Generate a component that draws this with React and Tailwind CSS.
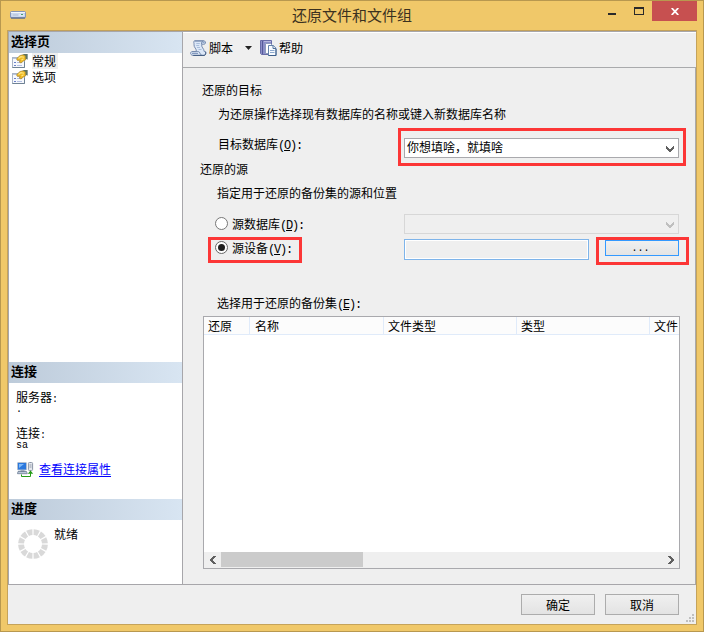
import React from "react";

function Key({ k }) {
  return (
    <span className="font-['Liberation_Mono',monospace] text-[12px] leading-none tracking-[-1.2px]">
      (<span className="underline underline-offset-1">{k}</span>):
    </span>
  );
}

function Chevron({ color = "#606060", className = "" }) {
  return (
    <svg width="8" height="6" viewBox="0 0 8 6" className={className} shapeRendering="crispEdges">
      <path d="M0 0h1v1h1v1h1v1h2v-1h1v-1h1v-1h1v3h-1v1h-1v1h-1v1h-2v-1h-1v-1h-1v-1h-1z" fill={color} />
    </svg>
  );
}

function DriveIcon() {
  return (
    <svg width="16" height="8" viewBox="0 0 16 8">
      <rect x="0.5" y="0.5" width="15" height="6.5" rx="1" fill="#b9c9e4" stroke="#8595b8" />
      <path d="M1 1.5h14" stroke="#f3f7fc" />
      <path d="M1.5 2.5h13v3h-13z" fill="#dce6f4" />
      <path d="M2.5 4h6" stroke="#a3b3d2" />
      <rect x="11" y="3" width="2" height="1" fill="#4d9c70" />
      <path d="M1 7h14" stroke="#49597c" />
    </svg>
  );
}

function PageIcon() {
  return (
    <svg width="17" height="15" viewBox="0 0 17 15" className="shrink-0">
      <rect x="0.5" y="3.5" width="12" height="10" fill="#f6f8fc" stroke="#aab5c6" />
      <path d="M1 4.5h11" stroke="#b8c5dc" />
      <path d="M.5 13.5h12v-6" stroke="#6f8294" fill="none" />
      <path d="M2 8.5h2M2 11.5h2" stroke="#6a80c8" />
      <path d="M5 8.5h5M5 11.5h5" stroke="#b4bfe2" />
      <path d="M4.5 4.8L8 1.5 11 .8l3 .7v4L11.5 7 9 9 7.3 8.2l.8-2-2.6.3z" fill="#efb921" stroke="#94762f" strokeWidth=".6" />
      <path d="M6.5 4.5L9 2.6l3 .7M9.5 6l2-1.2" stroke="#ffe782" fill="none" strokeWidth="1.1" />
      <path d="M10.5 0H16v5.5l-2.5-.8V2z" fill="#63745c" />
      <path d="M15.5 0v5" stroke="#8fa0a0" />
    </svg>
  );
}

function ScriptIcon() {
  return (
    <svg width="17" height="17" viewBox="0 0 17 17">
      <path d="M4.5.8h9.2c2.3 0 2.3 3.4.4 3.4h-2.3c-1 3 2.5 4.5 2.4 7.3h1.3c.8 0 .9 3.9-1.6 3.9H3.2c-3.2 0-3.4-3.8-.9-3.8h4C7 9 3.5 7.2 4 4.5 4.3 3 3 2 4.5.8z" fill="#dce7f7" stroke="#7489ad" />
      <path d="M4.5 1h9c-1.7.4-2 1.5-2 3.2M2 11.7h6.7c1.2 0 1.1 3 3 3.5" fill="none" stroke="#7489ad" />
      <path d="M3.2 15.4H14c1.3 0 1.8-1.6 1.5-3.2" fill="none" stroke="#3f597f" />
      <path d="M6.3 3.5h3.5M6.2 5.5h3M7 7.5h3M8.5 9.5h3" stroke="#a9bedb" />
      <path d="M2 13.5h6" stroke="#8499be" />
      <path d="M12.5 2.5h2" stroke="#8ba4c9" />
    </svg>
  );
}

function HelpIcon() {
  return (
    <svg width="17" height="17" viewBox="0 0 17 17">
      <path d="M.5.5h11v14H1.5l-1-1z" fill="#8c8fc8" stroke="#696ca8" />
      <path d="M2.5 1v13" stroke="#555a99" />
      <path d="M4 1.5h7" stroke="#b5b8df" />
      <path d="M5.5 3.5h5l2 2v8h-7z" fill="#fff" stroke="#8c9bbd" />
      <path d="M8.5 5.5h4.8L16 8.2v7.3H8.5z" fill="#f8fbff" stroke="#6583aa" />
      <path d="M13 5.5v3h3" fill="none" stroke="#52719a" />
      <path d="M10 10.5h4.5M10 12.5h4.5" stroke="#8ca9ce" />
      <path d="M8.5 15.5H16V9" fill="none" stroke="#3d5f8b" />
    </svg>
  );
}

function ConnectionIcon() {
  return (
    <svg width="17" height="16" viewBox="0 0 17 16">
      <rect x="0.5" y="0.5" width="9" height="7.5" rx=".8" fill="#2b78dd" stroke="#b4bfce" />
      <path d="M2 2h5L2 6z" fill="#7db9fa" />
      <path d="M3.5 8.5h4V10h-4z" fill="#687992" />
      <path d="M1 9.5h8.5l.8 2.2H.5z" fill="#bcc8da" stroke="#6c7c93" strokeWidth=".8" />
      <rect x="11.4" y="0.5" width="4.2" height="8" rx="1" fill="#e5e8ee" stroke="#8c96a7" />
      <path d="M12.5 3h2M12.5 5h2" stroke="#929baa" />
      <path d="M4.5 12.5v2h9V10" fill="none" stroke="#259b16" />
      <path d="M10.8 11.8L13.5 8.5l2.7 3.3z" fill="#259b16" />
    </svg>
  );
}

const ticks = [0, 30, 60, 90, 120, 150, 180, 210, 240, 270, 300, 330];

function Spinner() {
  return (
    <svg width="30" height="30" viewBox="0 0 30 30">
      {ticks.map((a) => (
        <path key={a} d="M11.8.5Q15-.3 18.2.5L16.8 6.2Q15 5.8 13.2 6.2z" fill="#d9d9d9" transform={`rotate(${a + 15} 15 15)`} />
      ))}
    </svg>
  );
}

function SectionTitle({ children }) {
  return (
    <h2 className="h-[21px] shrink-0 bg-linear-to-r from-[#bdcbda] to-[#d8e5f2] pl-[2px] text-[13px] leading-[17px] font-bold">
      {children}
    </h2>
  );
}

function Sidebar() {
  return (
    <aside className="flex w-[175px] shrink-0 flex-col border-x border-t border-b border-[#a7a6aa] bg-white">
      <SectionTitle>选择页</SectionTitle>
      <nav className="h-[309px] pl-[3px]">
        <div className="flex h-4 items-center">
          <PageIcon />
          <span className="ml-[3px] h-4 bg-[#efefef] pr-[2px] leading-4">常规</span>
        </div>
        <div className="flex h-4 items-center">
          <PageIcon />
          <span className="ml-[3px] h-4 leading-4">选项</span>
        </div>
      </nav>
      <SectionTitle>连接</SectionTitle>
      <div className="flex h-[116px] flex-col pt-[6px] pl-[7px]">
        <div className="h-4 leading-4">服务器<span className="font-['Liberation_Mono',monospace] text-[10px]">:</span></div>
        <div className="h-[11px] font-['Liberation_Mono',monospace] text-[10px] leading-[10px]">.</div>
        <div className="mt-[9px] h-4 leading-4">连接<span className="font-['Liberation_Mono',monospace] text-[10px]">:</span></div>
        <div className="h-[10px] font-['Liberation_Mono',monospace] text-[10px] leading-[9px]">sa</div>
        <div className="mt-[10px] flex h-[18px] items-center pl-px">
          <ConnectionIcon />
          <a className="mb-[2px] ml-[5px] leading-4 text-[#0000ff] underline underline-offset-2">查看连接属性</a>
        </div>
      </div>
      <SectionTitle>进度</SectionTitle>
      <div className="flex flex-1 pt-[6px] pl-[9px]">
        <div className="mt-[3px]"><Spinner /></div>
        <span className="ml-[6px] leading-4">就绪</span>
      </div>
    </aside>
  );
}

function BackupTable() {
  return (
    <div className="ml-[20px] flex h-[253px] w-[477px] flex-col border border-[#a9a9ad] bg-white">
      <div className="flex h-[18px] shrink-0 overflow-hidden border-b border-[#e0ebfa] bg-[#fcfcfc] leading-[18px] whitespace-nowrap">
        <div className="w-[46px] shrink-0 border-r border-[#e0ebfa] pl-[4px]">还原</div>
        <div className="w-[134px] shrink-0 border-r border-[#e0ebfa] pl-[5px]">名称</div>
        <div className="w-[133px] shrink-0 border-r border-[#e0ebfa] pl-[4px]">文件类型</div>
        <div className="w-[133px] shrink-0 border-r border-[#e0ebfa] pl-[4px]">类型</div>
        <div className="w-[29px] shrink-0 overflow-hidden pl-[4px]">文件</div>
      </div>
      <div className="flex-1" />
      <div className="flex h-4 shrink-0 items-start bg-[#efefef]">
        <div className="flex h-[15px] w-[17px] items-center justify-center"><Chevron className="rotate-90" /></div>
        <div className="h-[15px] w-[142px] bg-[#cbcbcb]" />
        <div className="flex-1" />
        <div className="flex h-[15px] w-[17px] items-center justify-center"><Chevron className="-rotate-90" /></div>
      </div>
    </div>
  );
}

function RestoreForm() {
  return (
    <main className="h-[517px] border-t border-r border-[#a9aaac]">
      <div className="mt-[10px] h-6 pl-[19px] leading-6">还原的目标</div>
      <div className="h-6 pl-[35px] leading-6">为还原操作选择现有数据库的名称或键入新数据库名称</div>
      <div className="mt-3 flex h-5 items-start pl-[35px]">
        <span className="w-[186px] leading-[12px]">目标数据库<Key k="O" /></span>
        <div className="relative flex h-5 w-[275px] items-center justify-between border border-[#a9a9ad] bg-white pr-[4px] pl-[2px]">
          <span className="leading-[18px] pb-[2px]">你想填啥，就填啥</span>
          <Chevron className="mt-[2px]" />
          <div className="absolute -top-[11px] -left-[7px] h-[38px] w-[288px] border-[3px] border-[#fc3636]" />
        </div>
      </div>
      <div className="mt-[2px] h-[18px] pl-[17px] leading-[18px]">还原的源</div>
      <div className="mt-[6px] h-[18px] pl-[34px] leading-[18px]">指定用于还原的备份集的源和位置</div>
      <div className="mt-3 flex h-5 items-center pl-[32px]">
        <span className="mr-[4px] mb-[2px] h-[13px] w-[13px] rounded-full border border-[#777] bg-white" />
        <span className="w-[172px] leading-5">源数据库<Key k="D" /></span>
        <div className="flex h-5 w-[275px] items-center justify-end border border-[#d7d7d7] pr-[4px]">
          <Chevron color="#bfbfbf" className="mt-[2px]" />
        </div>
      </div>
      <div className="mt-[5px] flex h-[21px] items-start pl-[32px]">
        <div className="relative flex w-[189px] items-start">
          <span className="mt-[2px] mr-[4px] flex h-[13px] w-[13px] items-center justify-center rounded-full border border-[#666] bg-white">
            <span className="h-[7px] w-[7px] rounded-full bg-[#202020]" />
          </span>
          <span className="leading-[18px]">源设备<Key k="V" /></span>
          <div className="absolute -top-[2px] -left-[7px] h-[26px] w-[94px] border-[3px] border-[#fc3636]" />
        </div>
        <div className="h-[21px] w-[185px] border border-[#7eb4ea] bg-[#efefef] shadow-[inset_0_0_0_1px_white]" />
        <div className="relative mt-px ml-4 h-4 w-[74px]">
          <button className="block h-4 w-[74px] border border-[#3399ff] bg-linear-to-b from-[#f0f0f0] to-[#e4e4e4] pr-[3px] font-['Liberation_Mono',monospace] text-[10px] leading-[15px]">...</button>
          <div className="absolute -top-[3px] -left-[9px] h-[28px] w-[93px] border-[3px] border-[#fc3636]" />
        </div>
      </div>
      <div className="mt-[34px] h-[22px] pl-[34px] leading-[18px]">选择用于还原的备份集<Key k="E" /></div>
      <BackupTable />
    </main>
  );
}

function TitleBar() {
  return (
    <header className="flex h-[29px] items-start">
      <div className="mt-[10px] ml-[9px]"><DriveIcon /></div>
      <h1 className="ml-[266px] w-[130px] text-[15px] leading-[27px] whitespace-nowrap text-[#3b311f]">还原文件和文件组</h1>
      <div className="ml-auto flex">
        <svg width="44" height="20" viewBox="0 0 44 20" shapeRendering="crispEdges">
          <path d="M0 12h8v2H0z" fill="#2a2a2a" />
          <path d="M26 6h10v8H26zM27 8v5h8V8z" fillRule="evenodd" fill="#2a2a2a" />
        </svg>
        <button className="mr-[6px] flex h-5 w-[45px] items-center justify-center bg-[#c75050]">
          <svg width="8" height="7" viewBox="0 0 8 7" className="mt-[1px]">
            <path d="M.7 0l6.6 7M7.3 0L.7 7" stroke="white" strokeWidth="1.8" />
          </svg>
        </button>
      </div>
    </header>
  );
}

export default function App() {
  return (
    <div className="h-[632px] w-[704px] overflow-hidden border border-[#b8984f] bg-[#f0c869] font-['Noto_Sans_CJK_SC',sans-serif] text-[12px] text-black">
      <TitleBar />
      <div className="ml-[6px] flex h-[595px] w-[690px] flex-col border border-[#c5a35a] border-t-[#c2a05a] bg-[#efefef]">
        <div className="flex h-[554px] shrink-0">
          <Sidebar />
          <div className="w-[513px] border-t border-b border-[#a7a6aa]">
            <div className="flex h-[35px] items-center border-t border-white pb-[4px] pl-[7px]">
              <ScriptIcon />
              <span className="ml-[2px]">脚本</span>
              <svg width="7" height="4" className="mr-[8px] ml-[12px]" viewBox="0 0 7 4"><path d="M0 0h7L3.5 4z" fill="#222" /></svg>
              <HelpIcon />
              <span className="ml-[2px]">帮助</span>
            </div>
            <RestoreForm />
          </div>
        </div>
        <footer className="flex h-[39px] items-start pt-[9px]">
          <button className="ml-[513px] h-[21px] w-[74px] border border-[#acacac] bg-linear-to-b from-[#f0f0f0] to-[#e3e3e3] leading-5">确定</button>
          <button className="ml-[10px] h-[21px] w-[74px] border border-[#acacac] bg-linear-to-b from-[#f0f0f0] to-[#e3e3e3] leading-5">取消</button>
          <svg width="8" height="8" viewBox="0 0 8 8" className="mt-[20px] ml-[7px]" fill="#bfbfbf" shapeRendering="crispEdges">
            <path d="M6 0h2v2H6zM3 3h2v2H3zM6 3h2v2H6zM0 6h2v2H0zM3 6h2v2H3zM6 6h2v2H6z" />
          </svg>
        </footer>
      </div>
    </div>
  );
}
